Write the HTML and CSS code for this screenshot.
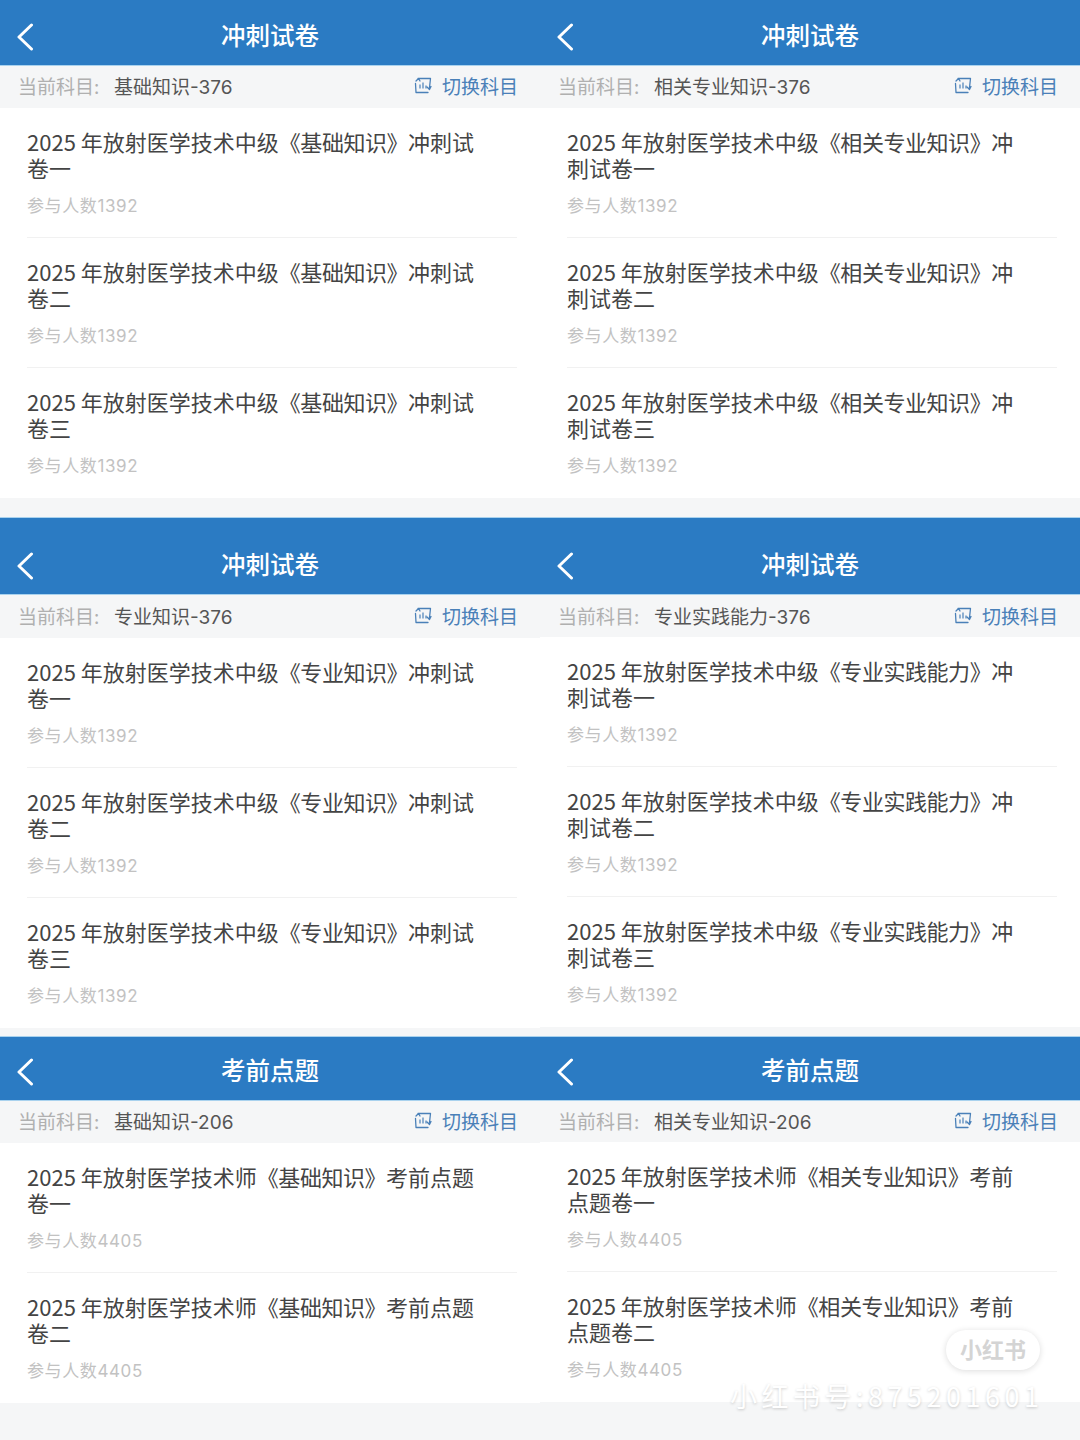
FILE: index.html
```html
<!DOCTYPE html>
<html>
<head>
    <title>冲刺试卷</title>
    <link rel="stylesheet" href="styles.css">
</head>
<body>
    <div class="sheet">
        <svg width="0" height="0" class="defs">
            <symbol id="back" viewBox="0 0 18 28"><path d="M15.5 2 L3 14 L15.5 26" fill="none" stroke="currentColor" stroke-width="3" stroke-linecap="round" stroke-linejoin="round"/></symbol>
            <symbol id="swap" viewBox="0 0 18 17"><path d="M4 1.5 H16.5 L15.5 10.5 M14 15.5 H2 L1.5 6.5 M2 4 L4.5 1.5 L6 4 M13 10 L15.5 12.5 L17 9.5" fill="none" stroke="currentColor" stroke-width="1.3" stroke-linecap="round" stroke-linejoin="round"/><path d="M6 11.5 V7.5 M9 11.5 V5.5 M12 11.5 V8.5" fill="none" stroke="currentColor" stroke-width="1.2"/></symbol>
        </svg>

        <section class="screen first">
            <div class="title-bar"><svg class="back"><use href="#back"/></svg><h1>冲刺试卷</h1></div>
            <div class="subject"><span class="label">当前科目:</span><span class="value">基础知识-376</span><span class="switch"><svg class="swap"><use href="#swap"/></svg>切换科目</span></div>
            <ul class="paper-list">
                <li><h2>2025 年放射医学技术中级<span class="book">《基础知识》</span>冲刺试<br>卷一</h2><p>参与人数1392</p></li>
                <li><h2>2025 年放射医学技术中级<span class="book">《基础知识》</span>冲刺试<br>卷二</h2><p>参与人数1392</p></li>
                <li><h2>2025 年放射医学技术中级<span class="book">《基础知识》</span>冲刺试<br>卷三</h2><p>参与人数1392</p></li>
            </ul>
        </section>
        <section class="screen first">
            <div class="title-bar"><svg class="back"><use href="#back"/></svg><h1>冲刺试卷</h1></div>
            <div class="subject"><span class="label">当前科目:</span><span class="value">相关专业知识-376</span><span class="switch"><svg class="swap"><use href="#swap"/></svg>切换科目</span></div>
            <ul class="paper-list">
                <li><h2>2025 年放射医学技术中级<span class="book">《相关专业知识》</span>冲<br>刺试卷一</h2><p>参与人数1392</p></li>
                <li><h2>2025 年放射医学技术中级<span class="book">《相关专业知识》</span>冲<br>刺试卷二</h2><p>参与人数1392</p></li>
                <li><h2>2025 年放射医学技术中级<span class="book">《相关专业知识》</span>冲<br>刺试卷三</h2><p>参与人数1392</p></li>
            </ul>
        </section>

        <section class="screen second">
            <div class="title-bar"><svg class="back"><use href="#back"/></svg><h1>冲刺试卷</h1></div>
            <div class="subject"><span class="label">当前科目:</span><span class="value">专业知识-376</span><span class="switch"><svg class="swap"><use href="#swap"/></svg>切换科目</span></div>
            <ul class="paper-list">
                <li><h2>2025 年放射医学技术中级<span class="book">《专业知识》</span>冲刺试<br>卷一</h2><p>参与人数1392</p></li>
                <li><h2>2025 年放射医学技术中级<span class="book">《专业知识》</span>冲刺试<br>卷二</h2><p>参与人数1392</p></li>
                <li><h2>2025 年放射医学技术中级<span class="book">《专业知识》</span>冲刺试<br>卷三</h2><p>参与人数1392</p></li>
            </ul>
        </section>
        <section class="screen second nudged">
            <div class="title-bar"><svg class="back"><use href="#back"/></svg><h1>冲刺试卷</h1></div>
            <div class="subject"><span class="label">当前科目:</span><span class="value">专业实践能力-376</span><span class="switch"><svg class="swap"><use href="#swap"/></svg>切换科目</span></div>
            <ul class="paper-list">
                <li><h2>2025 年放射医学技术中级<span class="book">《专业实践能力》</span>冲<br>刺试卷一</h2><p>参与人数1392</p></li>
                <li><h2>2025 年放射医学技术中级<span class="book">《专业实践能力》</span>冲<br>刺试卷二</h2><p>参与人数1392</p></li>
                <li><h2>2025 年放射医学技术中级<span class="book">《专业实践能力》</span>冲<br>刺试卷三</h2><p>参与人数1392</p></li>
            </ul>
        </section>

        <section class="screen third">
            <div class="title-bar"><svg class="back"><use href="#back"/></svg><h1>考前点题</h1></div>
            <div class="subject"><span class="label">当前科目:</span><span class="value">基础知识-206</span><span class="switch"><svg class="swap"><use href="#swap"/></svg>切换科目</span></div>
            <ul class="paper-list">
                <li><h2>2025 年放射医学技术师<span class="book">《基础知识》</span>考前点题<br>卷一</h2><p>参与人数4405</p></li>
                <li><h2>2025 年放射医学技术师<span class="book">《基础知识》</span>考前点题<br>卷二</h2><p>参与人数4405</p></li>
            </ul>
        </section>
        <section class="screen third nudged">
            <div class="title-bar"><svg class="back"><use href="#back"/></svg><h1>考前点题</h1></div>
            <div class="subject"><span class="label">当前科目:</span><span class="value">相关专业知识-206</span><span class="switch"><svg class="swap"><use href="#swap"/></svg>切换科目</span></div>
            <ul class="paper-list">
                <li><h2>2025 年放射医学技术师<span class="book">《相关专业知识》</span>考前<br>点题卷一</h2><p>参与人数4405</p></li>
                <li><h2>2025 年放射医学技术师<span class="book">《相关专业知识》</span>考前<br>点题卷二</h2><p>参与人数4405</p></li>
            </ul>
        </section>

        <div class="stamp">小红书</div>
        <div class="stamp-id">小红书号:875201601</div>
    </div>
</body>
</html>
```

FILE: styles.css
```css
body {
    margin: 0;
    font-family: "Noto Sans CJK SC", "Liberation Sans", sans-serif;
    background-color: #f5f6f7;
}
.defs {
    position: absolute;
}
.sheet {
    position: relative;
    width: 1080px;
    height: 1440px;
    display: grid;
    grid-template-columns: 540px 540px;
    grid-template-rows: 517px 519px 404px;
    overflow: hidden;
}
.screen {
    display: flex;
    flex-direction: column;
}
.title-bar {
    position: relative;
    display: flex;
    align-items: flex-end;
    justify-content: center;
    box-sizing: border-box;
    padding-bottom: 13px;
    background-color: #2b7bc3;
    color: white;
    border-bottom: 1px solid #a9d2ee;
}
.first .title-bar {
    height: 66px;
}
.second .title-bar {
    height: 78px;
    border-top: 1px solid #a9d2ee;
}
.third .title-bar {
    height: 65px;
    border-top: 1px solid #a9d2ee;
}
.title-bar h1 {
    margin: 0;
    font-size: 24.5px;
    font-weight: 500;
    line-height: 34px;
}
.back {
    position: absolute;
    left: 16px;
    bottom: 14px;
    width: 18px;
    height: 28px;
}
.subject {
    display: flex;
    align-items: center;
    box-sizing: border-box;
    height: 42px;
    padding: 0 22px 3px 18px;
    font-size: 19px;
}
.second .subject {
    height: 43px;
}
.label {
    width: 96px;
    color: #b0b0b0;
}
.value {
    color: #555;
    font-family: Inter, "Noto Sans CJK SC", sans-serif;
}
.switch {
    display: flex;
    align-items: center;
    margin-left: auto;
    color: #4a80b8;
}
.swap {
    width: 18px;
    height: 17px;
    margin-right: 10px;
}
.paper-list {
    margin: 0;
    padding: 0 23px 0 27px;
    list-style: none;
    background: white;
}
.nudged .paper-list {
    margin-top: -1px;
}
.paper-list li {
    height: 130px;
    box-sizing: border-box;
    padding-top: 21px;
    border-bottom: 1px solid #f1f1f1;
}
.paper-list li:last-child {
    border-bottom: none;
}
.paper-list h2 {
    margin: 0;
    font-size: 22px;
    font-weight: 400;
    line-height: 25.5px;
    color: #444;
}
.book {
    letter-spacing: -0.45px;
}
.paper-list p {
    margin: 14px 0 0;
    font-family: Inter, "Noto Sans CJK SC", sans-serif;
    font-size: 17px;
    line-height: 24px;
    letter-spacing: 0.6px;
    color: #c2c2c2;
}
.stamp {
    position: absolute;
    left: 946px;
    top: 1330px;
    width: 94px;
    height: 40px;
    border-radius: 20px;
    background: white;
    box-shadow: 0 1px 6px rgba(0, 0, 0, 0.14);
    color: #d4d4d4;
    font-size: 22px;
    font-weight: 700;
    line-height: 37px;
    text-align: center;
}
.stamp-id {
    position: absolute;
    left: 730px;
    top: 1381px;
    font-size: 27px;
    line-height: 30px;
    letter-spacing: 4.5px;
    color: white;
    text-shadow: 0 1px 3px rgba(0, 0, 0, 0.2);
    white-space: nowrap;
}
```
